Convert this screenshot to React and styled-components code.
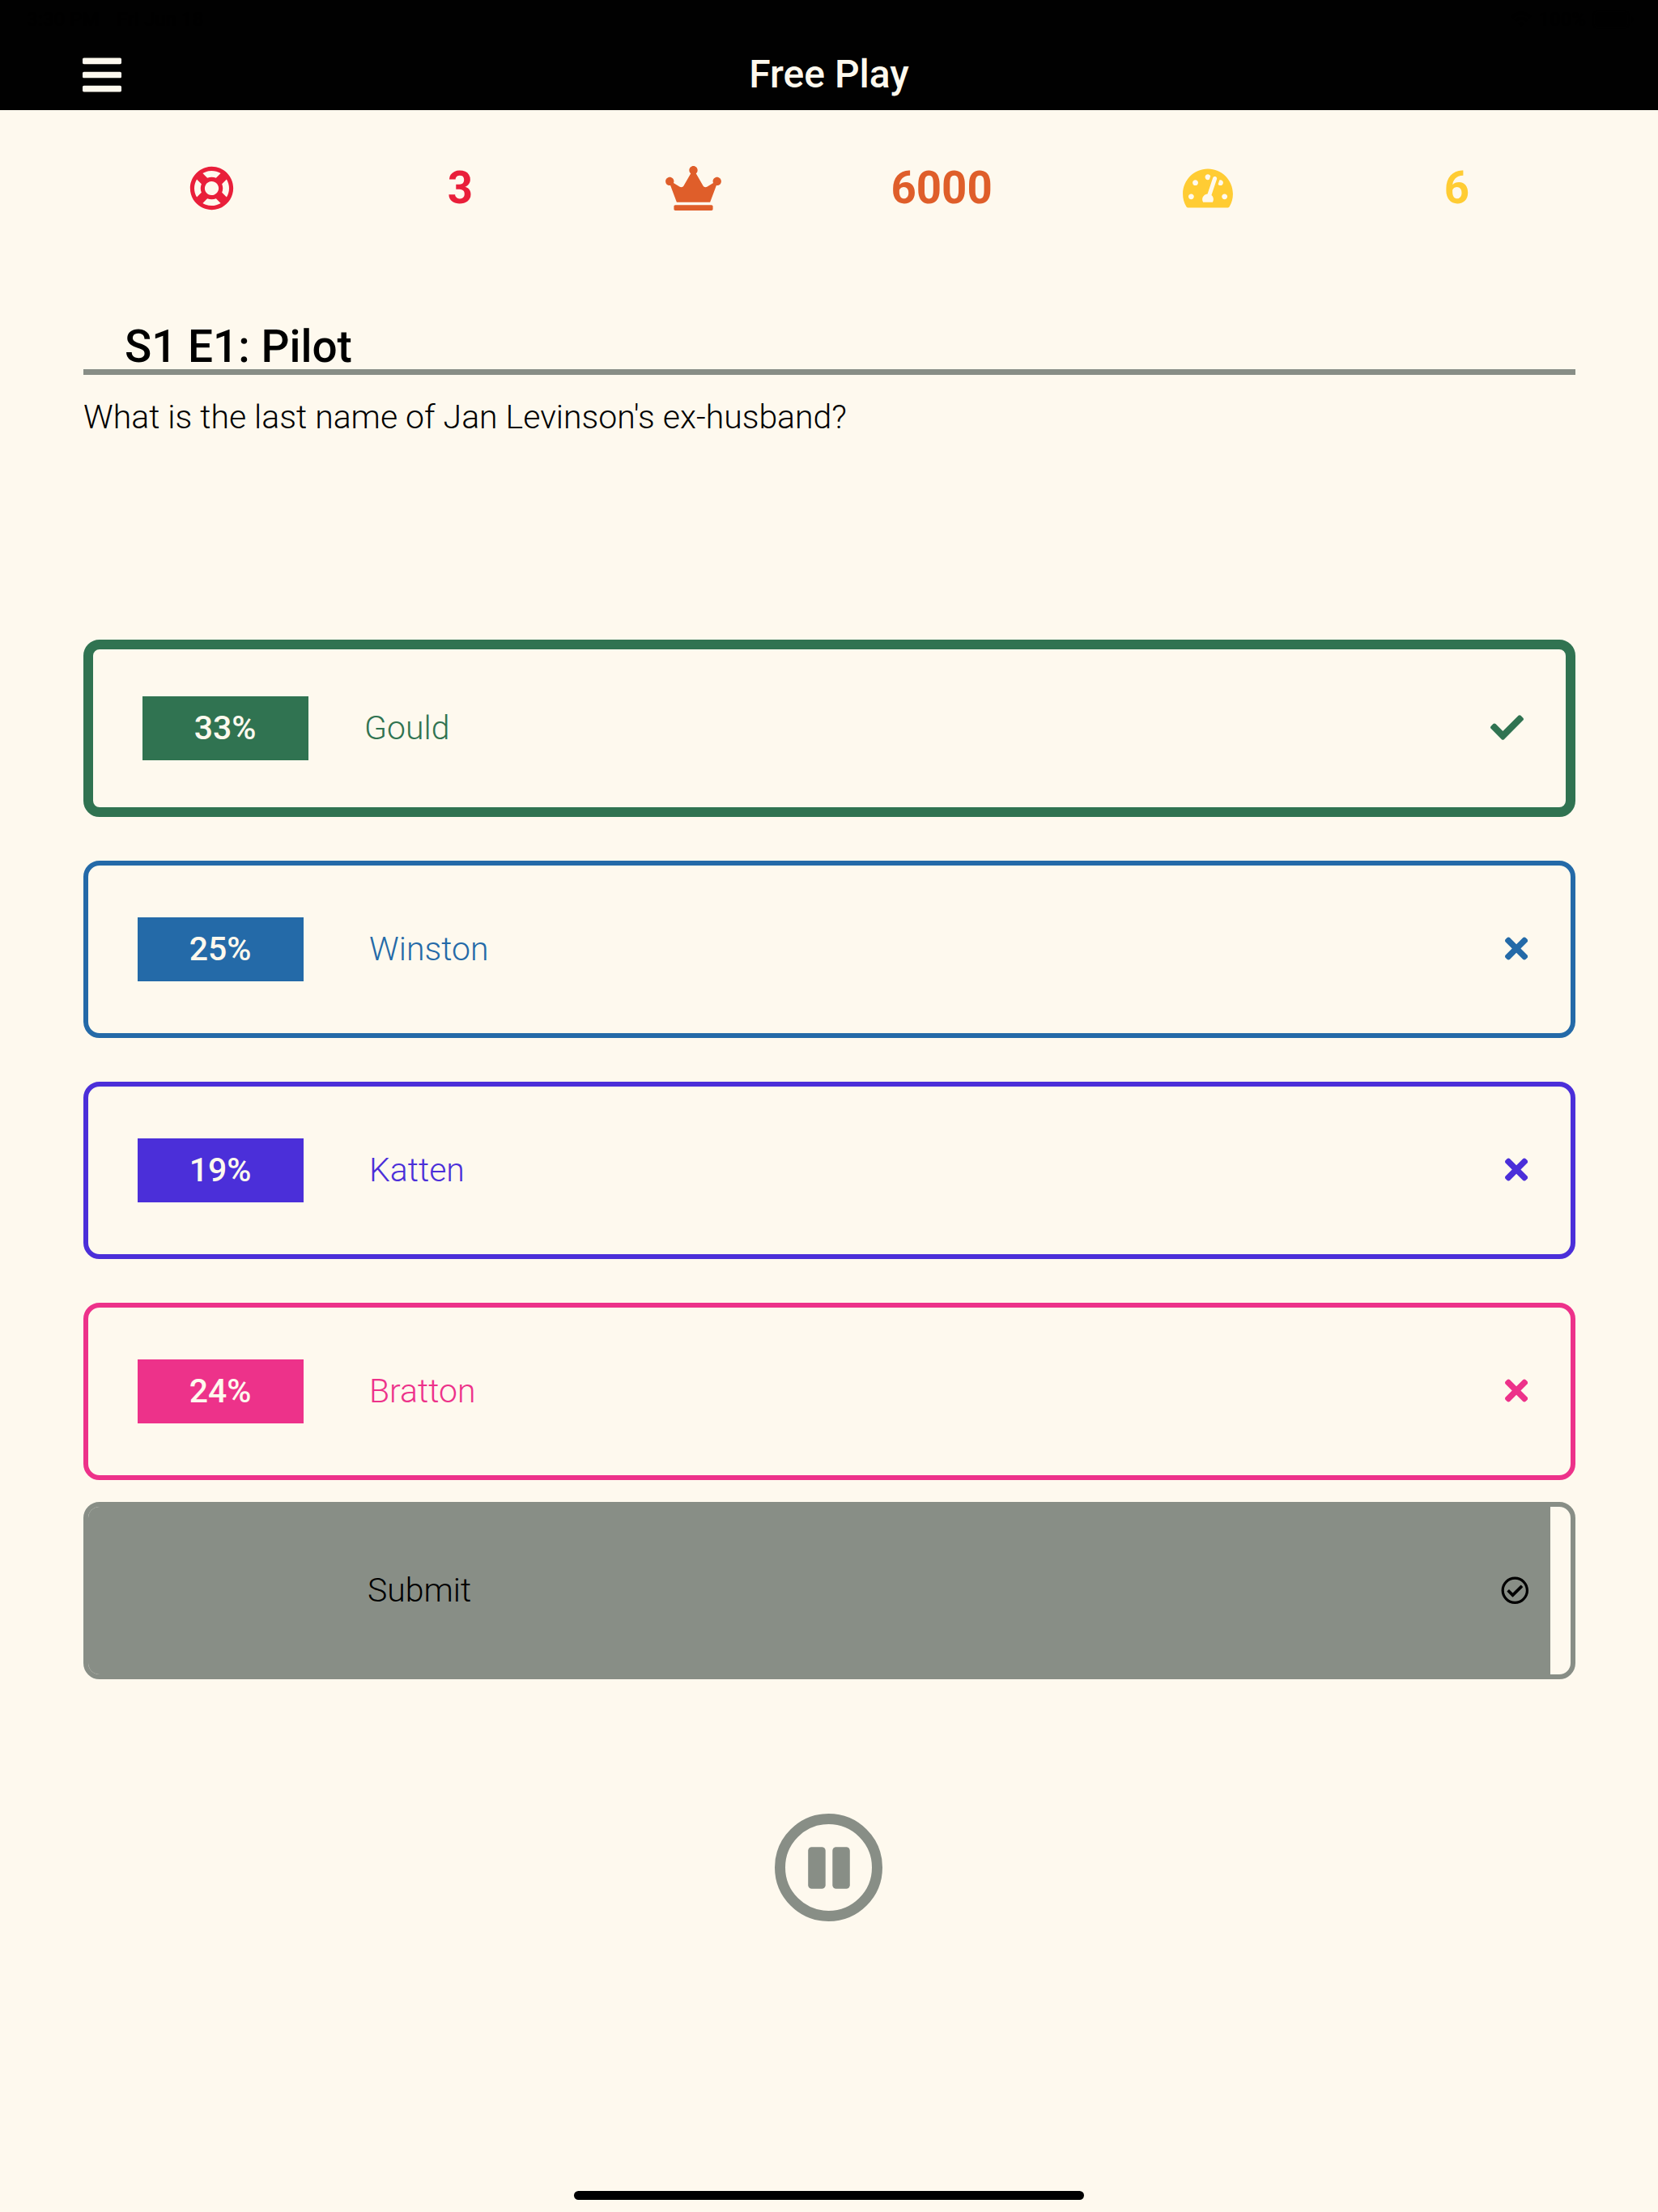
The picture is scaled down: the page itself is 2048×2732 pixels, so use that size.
import React from "react";
import styled, { createGlobalStyle } from "styled-components";
import {
  FaBars,
  FaRegLifeRing,
  FaCrown,
  FaTachometerAlt,
  FaCheck,
  FaTimes,
  FaRegCheckCircle,
} from "react-icons/fa";

const cream = "#fef9ee";
const slate = "#888e86";

const GlobalStyle = createGlobalStyle`
  *, *::before, *::after { box-sizing: border-box; }
  body {
    margin: 0;
    background: ${cream};
    font-family: Roboto, "Noto Sans", sans-serif;
    color: #000;
  }
  svg { display: block; flex: none; }
`;

const Screen = styled.div`
  position: relative;
  display: flex;
  flex-direction: column;
  width: 2048px;
  height: 2732px;
  overflow: hidden;
  background: ${cream};
`;

const Header = styled.header`
  height: 136px;
  background: #010101;
  color: ${cream};
`;

const StatusBar = styled.div`
  display: flex;
  justify-content: space-between;
  align-items: center;
  height: 48px;
  padding: 0 29px 0 33px;
  color: #000;
  font-size: 24px;
  font-weight: 500;
`;

const StatusGroup = styled.div`
  display: flex;
  align-items: center;
  gap: ${(p) => p.$gap}px;
`;

const NavBar = styled.div`
  display: grid;
  grid-template-columns: 1fr auto 1fr;
  align-items: center;
  height: 88px;
  padding: 0 102px;
`;

const MenuButton = styled.button`
  display: flex;
  justify-self: start;
  padding: 0;
  border: 0;
  background: none;
  color: inherit;
`;

const Title = styled.h1`
  margin: 0;
  font-size: 48px;
  font-weight: 500;
  line-height: 56px;
`;

const Stats = styled.section`
  display: grid;
  grid-template-columns: 306.6px 306.6px 270.4px 342px 316.6px 297.4px;
  align-items: center;
  justify-items: center;
  height: 193px;
  padding-left: 108px;
`;

const StatIcon = styled.span`
  display: flex;
  color: ${(p) => p.$color};
`;

const StatValue = styled.span`
  margin-bottom: 2px;
  padding-left: 1px;
  color: ${(p) => p.$color};
  font-size: 54.6px;
  font-weight: 700;
  line-height: 64px;
`;

const Main = styled.main`
  display: flex;
  flex-direction: column;
  width: 1843px;
  margin: 66px 0 0 103px;
`;

const Episode = styled.h2`
  height: 68px;
  margin: 0;
  padding: 1px 0 0 51px;
  border-bottom: 7px solid ${slate};
  font-size: 54.9px;
  font-weight: 500;
  line-height: 64px;
`;

const Question = styled.p`
  height: 327px;
  margin: 0;
  padding-top: 28px;
  font-size: 40.96px;
  font-weight: 300;
  line-height: 48px;
`;

const Answers = styled.div`
  display: flex;
  flex-direction: column;
  gap: 54px;
`;

const Card = styled.button`
  position: relative;
  display: flex;
  align-items: center;
  width: 100%;
  height: 219px;
  padding: 0 ${(p) => (p.$strong ? 52 : 53)}px 0 61px;
  border: ${(p) => (p.$strong ? 12 : 6)}px solid ${(p) => p.$color};
  border-radius: 20px;
  background: ${cream};
  color: ${(p) => p.$color};
  font-family: inherit;
  font-size: 40.96px;
  overflow: hidden;
`;

const Percent = styled.span`
  width: 205px;
  height: 79px;
  padding-right: 1px;
  background: ${(p) => p.$color};
  color: ${cream};
  font-weight: 500;
  line-height: 79px;
  text-align: center;
`;

const Label = styled.span`
  flex: 1;
  margin: 0 0 2px ${(p) => p.$indent}px;
  font-weight: 300;
  line-height: 48px;
  text-align: left;
`;

const Mark = styled.span`
  display: flex;
  margin-bottom: 2px;
`;

const SubmitCard = styled(Card)`
  margin-top: 27px;
`;

const Progress = styled.span`
  position: absolute;
  top: 0;
  bottom: 0;
  left: 0;
  background: ${slate};
`;

const SubmitLabel = styled.span`
  position: relative;
  flex: 1;
  margin: 0 0 2px 284px;
  color: #000;
  font-weight: 300;
  line-height: 48px;
  text-align: left;
`;

const SubmitIcon = styled.span`
  position: relative;
  display: flex;
  margin-right: -2px;
  color: #000;
`;

const PauseButton = styled.button`
  display: flex;
  align-items: center;
  justify-content: center;
  align-self: center;
  width: 133px;
  height: 133px;
  margin: 166px 2px 0 0;
  padding: 0;
  border: 13px solid ${slate};
  border-radius: 50%;
  background: none;
  color: ${slate};
`;

const HomeIndicator = styled.div`
  align-self: center;
  width: 630px;
  height: 11px;
  margin: auto 0 15px;
  border-radius: 6px;
  background: #000;
`;

const stats = [
  { icon: FaRegLifeRing, value: "3", color: "#e91f3a", width: 55 },
  { icon: FaCrown, value: "6000", color: "#df5e2a", width: 69 },
  { icon: FaTachometerAlt, value: "6", color: "#ffcc33", width: 62 },
];

const answers = [
  { percent: 33, label: "Gould", color: "#307351", correct: true, indent: 69 },
  { percent: 25, label: "Winston", color: "#246aa8", indent: 81 },
  { percent: 19, label: "Katten", color: "#4b2fd9", indent: 81 },
  { percent: 24, label: "Bratton", color: "#ed328a", indent: 81 },
];

const remaining = 1806 / 1831;

function WifiIcon() {
  return (
    <svg width="26" height="20" viewBox="0 0 26 20" fill="none" stroke="currentColor" strokeWidth="3.4">
      <path d="M1.5 7.2a16.5 16.5 0 0 1 23 0M5.8 11.6a10.2 10.2 0 0 1 14.4 0" />
      <path d="M9.4 15.2a5.2 5.2 0 0 1 7.2 0L13 19z" fill="currentColor" stroke="none" />
    </svg>
  );
}

function BatteryIcon() {
  return (
    <svg width="52" height="24" viewBox="0 0 52 24" fill="currentColor">
      <rect x="1" y="1" width="44" height="22" rx="6" fill="none" stroke="currentColor" strokeWidth="1.5" />
      <rect x="3.5" y="3.5" width="39" height="17" rx="4" />
      <path d="M47.5 8.5c2 .6 3 2 3 3.5s-1 2.9-3 3.5z" />
    </svg>
  );
}

function PauseIcon() {
  return (
    <svg width="52" height="52" viewBox="0 0 52 52" fill="currentColor">
      <rect x="0.2" y="0.3" width="21.5" height="51.4" rx="4.5" />
      <rect x="30.3" y="0.3" width="21.5" height="51.4" rx="4.5" />
    </svg>
  );
}

export default function App() {
  return (
    <>
      <GlobalStyle />
      <Screen>
        <Header>
          <StatusBar>
            <StatusGroup $gap={22}>
              <span>3:30 PM</span>
              <span>Fri Jun 18</span>
            </StatusGroup>
            <StatusGroup $gap={8}>
              <WifiIcon />
              <span>100%</span>
              <BatteryIcon />
            </StatusGroup>
          </StatusBar>
          <NavBar>
            <MenuButton aria-label="Menu">
              <FaBars style={{ width: 48, height: 55 }} />
            </MenuButton>
            <Title>Free Play</Title>
          </NavBar>
        </Header>
        <Stats>
          {stats.map(({ icon: Icon, value, color, width }) => (
            <React.Fragment key={color}>
              <StatIcon $color={color}>
                <Icon style={{ width, height: 55 }} />
              </StatIcon>
              <StatValue $color={color}>{value}</StatValue>
            </React.Fragment>
          ))}
        </Stats>
        <Main>
          <Episode>S1 E1: Pilot</Episode>
          <Question>What is the last name of Jan Levinson's ex-husband?</Question>
          <Answers>
            {answers.map(({ percent, label, color, correct, indent }) => (
              <Card key={label} $color={color} $strong={correct}>
                <Percent $color={color}>{percent}%</Percent>
                <Label $indent={indent}>{label}</Label>
                <Mark>
                  {correct ? (
                    <FaCheck style={{ width: 41, height: 41 }} />
                  ) : (
                    <FaTimes style={{ width: 28.2, height: 41 }} />
                  )}
                </Mark>
              </Card>
            ))}
          </Answers>
          <SubmitCard $color={slate}>
            <Progress style={{ width: `${remaining * 100}%` }} />
            <SubmitLabel>Submit</SubmitLabel>
            <SubmitIcon>
              <FaRegCheckCircle style={{ width: 34.6, height: 34.6 }} />
            </SubmitIcon>
          </SubmitCard>
          <PauseButton aria-label="Pause">
            <PauseIcon />
          </PauseButton>
        </Main>
        <HomeIndicator />
      </Screen>
    </>
  );
}
